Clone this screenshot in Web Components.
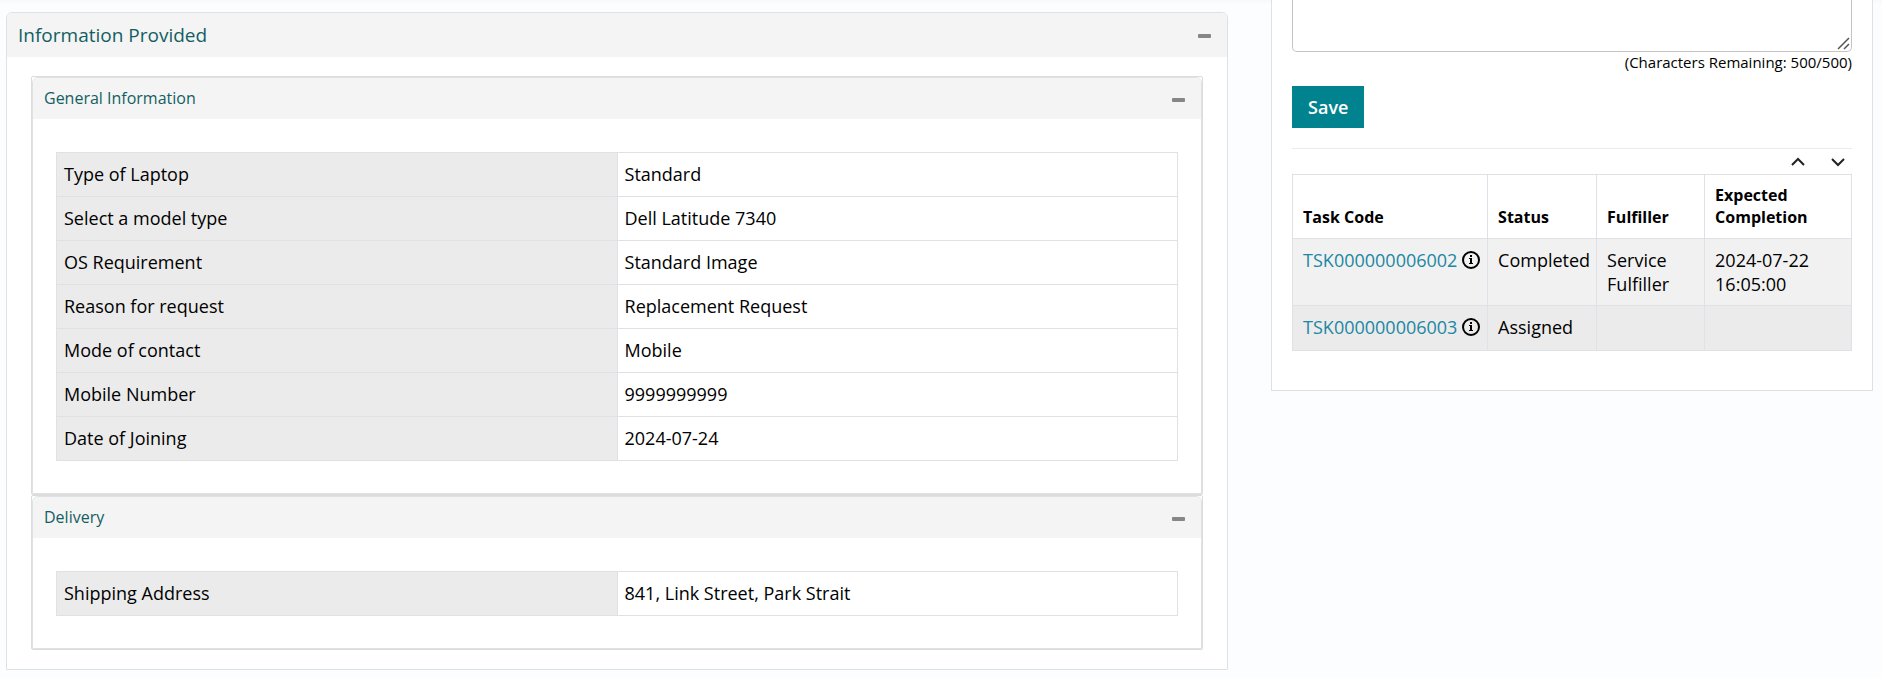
<!DOCTYPE html>
<html lang="en">
<head>
<meta charset="utf-8">
<title>Request Details</title>
<style>
  body {
    margin: 0;
    min-height: 100vh;
    background: linear-gradient(#f7f8fa, #fbfdff 4px);
    color: #000;
    font-family: "Open Sans", "Noto Sans", sans-serif;
    font-size: 18px;
    line-height: 24px;
  }
</style>
</head>
<body>

<request-page>
  <info-panel heading="Information Provided">
    <info-section heading="General Information">
      <field-table name="general"></field-table>
    </info-section>
    <info-section heading="Delivery">
      <field-table name="delivery"></field-table>
    </info-section>
  </info-panel>
  <side-panel slot="side">
    <comment-box limit="500"></comment-box>
    <task-table slot="tasks"></task-table>
  </side-panel>
</request-page>

<script>
const fields = {
  general: [
    ['Type of Laptop', 'Standard'],
    ['Select a model type', 'Dell Latitude 7340'],
    ['OS Requirement', 'Standard Image'],
    ['Reason for request', 'Replacement Request'],
    ['Mode of contact', 'Mobile'],
    ['Mobile Number', '9999999999'],
    ['Date of Joining', '2024-07-24'],
  ],
  delivery: [
    ['Shipping Address', '841, Link Street, Park Strait'],
  ],
};

const tasks = [
  { code: 'TSK000000006002', status: 'Completed', fulfiller: 'Service Fulfiller', expected: '2024-07-22 16:05:00' },
  { code: 'TSK000000006003', status: 'Assigned', fulfiller: '', expected: '' },
];

class RequestPage extends HTMLElement {
  constructor() {
    super();
    this.attachShadow({ mode: 'open' }).innerHTML = `
      <style>
        :host {
          display: grid;
          grid-template-columns: minmax(0, 67fr) minmax(0, 33fr);
          column-gap: 43px;
          align-items: start;
          padding: 0 9px 8px 6px;
        }
        main { padding-top: 12px; }
      </style>
      <main><slot></slot></main>
      <aside><slot name="side"></slot></aside>
    `;
  }
}
customElements.define('request-page', RequestPage);

// outer card
class InfoPanel extends HTMLElement {
  constructor() {
    super();
    this.attachShadow({ mode: 'open' }).innerHTML = `
      <style>
        :host {
          display: block;
          border: 1px solid #dee2e6;
          border-radius: 6px 6px 0 0;
          background: #fff;
        }
        header {
          display: flex;
          align-items: center;
          justify-content: space-between;
          height: 44px;
          padding: 0 16px 0 11px;
          border-radius: 5px 5px 0 0;
          background: #f4f4f4;
        }
        h2 {
          margin: 0;
          color: #135e63;
          font-size: 19px;
          font-weight: 400;
        }
        .body { padding: 19px 24px; }
      </style>
      <header>
        <h2></h2>
        <toggle-button></toggle-button>
      </header>
      <div class="body"><slot></slot></div>
    `;
    this.shadowRoot.querySelector('h2').textContent = this.getAttribute('heading');
  }
}

// card inside the outer one
class InfoSection extends HTMLElement {
  constructor() {
    super();
    this.attachShadow({ mode: 'open' }).innerHTML = `
      <style>
        :host {
          display: block;
          border: 1px solid #dcdcdc;
          border-radius: 2px;
        }
        section {
          border: 1px solid #dee2e6;
          border-radius: 6px 6px 0 0;
        }
        header {
          display: flex;
          align-items: center;
          justify-content: space-between;
          height: 41px;
          padding: 0 16px 0 11px;
          border-radius: 5px 5px 0 0;
          background: #f4f4f4;
        }
        h3 {
          margin: 0;
          padding-bottom: 2px;
          color: #135e63;
          font-size: 16px;
          font-weight: 400;
        }
        .body { padding: 33px 23px 32px; }
      </style>
      <section>
        <header>
          <h3></h3>
          <toggle-button></toggle-button>
        </header>
        <div class="body"><slot></slot></div>
      </section>
    `;
    this.shadowRoot.querySelector('h3').textContent = this.getAttribute('heading');
  }
}

class ToggleButton extends HTMLElement {
  constructor() {
    super();
    this.attachShadow({ mode: 'open' }).innerHTML = `
      <style>
        :host { display: block; }
        button {
          display: block;
          padding: 0;
          border: 0;
          background: none;
          cursor: pointer;
        }
        svg { display: block; }
      </style>
      <button type="button" aria-label="Collapse">
        <svg width="13" height="14" viewBox="0 0 13 14">
          <rect x="0" y="6" width="13" height="4" rx="1" fill="#868686"/>
        </svg>
      </button>
    `;
  }
}

// label / value table
class FieldTable extends HTMLElement {
  constructor() {
    super();
    const rows = fields[this.getAttribute('name')];
    this.attachShadow({ mode: 'open' }).innerHTML = `
      <style>
        :host { display: block; }
        table {
          width: 100%;
          table-layout: fixed;
          border-collapse: collapse;
        }
        th, td {
          box-sizing: border-box;
          height: 44px;
          padding: 0 7px 2px;
          border: 1px solid #dee2e6;
          font-weight: 400;
          text-align: left;
        }
        th { background: #ebebeb; }
      </style>
      <table>
        ${rows.map(([label, value]) => `<tr><th scope="row">${label}</th><td>${value}</td></tr>`).join('')}
      </table>
    `;
  }
}

class SidePanel extends HTMLElement {
  constructor() {
    super();
    this.attachShadow({ mode: 'open' }).innerHTML = `
      <style>
        :host {
          display: block;
          padding: 0 20px 39px;
          border: 1px solid #dee2e6;
          border-top: 0;
          background: #fff;
        }
        hr {
          margin: 20px 0 0;
          border: 0;
          border-top: 1px solid #e9ebed;
        }
      </style>
      <slot></slot>
      <hr>
      <slot name="tasks"></slot>
    `;
  }
}

class CommentBox extends HTMLElement {
  constructor() {
    super();
    const limit = this.getAttribute('limit');
    this.attachShadow({ mode: 'open' }).innerHTML = `
      <style>
        :host { display: block; }
        textarea {
          display: block;
          box-sizing: border-box;
          width: 100%;
          height: 52px;
          border: 1px solid #c4c4c4;
          border-top: 0;
          border-radius: 0 0 5px 5px;
          font: inherit;
          resize: vertical;
        }
        textarea::-webkit-resizer {
          background: url("data:image/svg+xml,%3Csvg xmlns='http://www.w3.org/2000/svg' width='15' height='15' fill='none' stroke='%23555' stroke-width='1.5'%3E%3Cpath d='M2 13L13 2M8 13l5-5'/%3E%3C/svg%3E") no-repeat right bottom;
        }
        p {
          margin: 0 0 14px;
          font-size: 15px;
          line-height: 20px;
          text-align: right;
        }
        button {
          display: block;
          height: 42px;
          padding: 0 16px;
          border: 0;
          background: #00838f;
          color: #fff;
          font: 600 18px "Open Sans", "Noto Sans", sans-serif;
          cursor: pointer;
        }
      </style>
      <textarea aria-label="Comment" maxlength="${limit}"></textarea>
      <p>(Characters Remaining: <span>${limit}/${limit}</span>)</p>
      <button type="button">Save</button>
    `;
    const area = this.shadowRoot.querySelector('textarea');
    const count = this.shadowRoot.querySelector('span');
    area.addEventListener('input', () => {
      count.textContent = `${limit - area.value.length}/${limit}`;
    });
  }
}

class TaskTable extends HTMLElement {
  constructor() {
    super();
    this.attachShadow({ mode: 'open' }).innerHTML = `
      <style>
        :host { display: block; }
        nav {
          display: flex;
          justify-content: flex-end;
          gap: 26px;
          height: 25px;
          padding-right: 7px;
        }
        nav button {
          padding: 0;
          border: 0;
          background: none;
          cursor: pointer;
        }
        svg { display: block; }
        table {
          width: 100%;
          table-layout: fixed;
          border-collapse: collapse;
        }
        .code { width: 195px; }
        .status { width: 109px; }
        .fulfiller { width: 108px; }
        th, td {
          box-sizing: border-box;
          border: 1px solid #dee2e6;
          text-align: left;
        }
        th {
          padding: 9px 8px 10px 10px;
          font-size: 16px;
          font-weight: 700;
          line-height: 22px;
          vertical-align: bottom;
        }
        td {
          height: 45px;
          padding: 9px 8px 9px 10px;
          vertical-align: top;
        }
        tbody tr { background: #ebebeb; }
        tbody tr:nth-child(odd) { background: #f1f1f1; }
        .task {
          display: flex;
          align-items: center;
          gap: 5px;
        }
        a {
          color: #1c87a3;
          text-decoration: none;
        }
      </style>
      <nav>
        <button type="button" aria-label="Move up">
          <svg width="14" height="25" viewBox="0 0 14 25" fill="none" stroke="#222" stroke-width="2">
            <path d="M1 16l6-6 6 6"/>
          </svg>
        </button>
        <button type="button" aria-label="Move down">
          <svg width="14" height="25" viewBox="0 0 14 25" fill="none" stroke="#222" stroke-width="2">
            <path d="M1 10l6 6 6-6"/>
          </svg>
        </button>
      </nav>
      <table>
        <colgroup>
          <col class="code">
          <col class="status">
          <col class="fulfiller">
          <col>
        </colgroup>
        <thead>
          <tr>
            <th scope="col">Task Code</th>
            <th scope="col">Status</th>
            <th scope="col">Fulfiller</th>
            <th scope="col">Expected Completion</th>
          </tr>
        </thead>
        <tbody>
          ${tasks.map(task => `
            <tr>
              <td><div class="task"><a href="#">${task.code}</a><info-icon></info-icon></div></td>
              <td>${task.status}</td>
              <td>${task.fulfiller}</td>
              <td>${task.expected}</td>
            </tr>
          `).join('')}
        </tbody>
      </table>
    `;
  }
}

class InfoIcon extends HTMLElement {
  constructor() {
    super();
    this.attachShadow({ mode: 'open' }).innerHTML = `
      <style>
        :host { display: block; }
        svg { display: block; }
      </style>
      <svg width="18" height="18" viewBox="0 0 18 18">
        <circle cx="9" cy="9" r="8" fill="none" stroke="#000" stroke-width="2"/>
        <path d="M8 4h2v2H8zM7 7h3v5h1v1H7v-1h1V8H7z"/>
      </svg>
    `;
  }
}

customElements.define('toggle-button', ToggleButton);
customElements.define('info-icon', InfoIcon);
customElements.define('field-table', FieldTable);
customElements.define('info-section', InfoSection);
customElements.define('info-panel', InfoPanel);
customElements.define('comment-box', CommentBox);
customElements.define('task-table', TaskTable);
customElements.define('side-panel', SidePanel);
</script>
</body>
</html>
